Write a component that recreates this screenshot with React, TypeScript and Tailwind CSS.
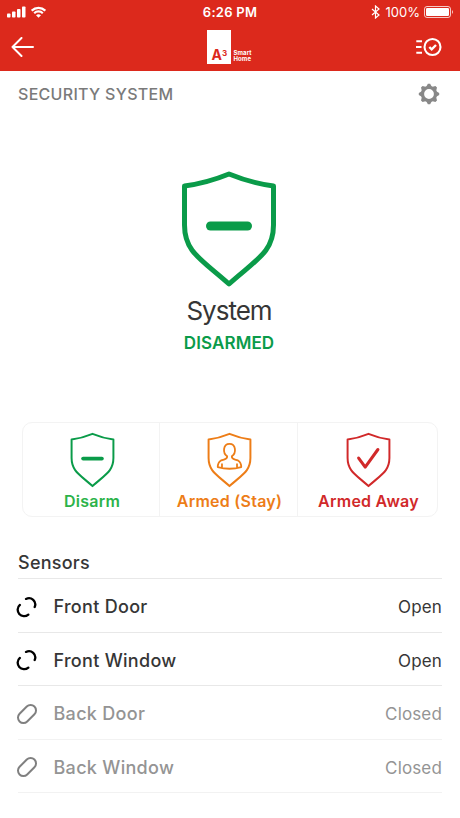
import type { ReactNode } from "react";

function Shield({ className, stroke, children }: { className: string; stroke: number; children: ReactNode }) {
  return (
    <svg viewBox="0 0 100 120" preserveAspectRatio="none" className={className} fill="none" stroke="currentColor" strokeWidth={stroke} strokeLinecap="round" strokeLinejoin="round">
      <path d="M50 6Q28 15 5.500 18V57C5.500 84 22 91 50 116C78 91 94.500 84 94.500 57V18Q72 15 50 6Z" />
      {children}
    </svg>
  );
}

function StatusBar() {
  return (
    <div className="flex h-6 items-center">
      <div className="flex w-[150px] items-center gap-[5px] pl-[7px]">
        <svg width="19" height="12" viewBox="0 0 19 12" fill="currentColor">
          <rect x="0" y="7.500" width="3.500" height="4" rx=".8" />
          <rect x="5" y="5.500" width="3.500" height="6" rx=".8" />
          <rect x="10" y="3" width="3.500" height="8.500" rx=".8" />
          <rect x="15" y="0.500" width="3.500" height="11" rx=".8" />
        </svg>
        <svg width="15" height="12" viewBox="0 0 15 12" fill="none" stroke="currentColor" strokeWidth="2.200">
          <path d="M.7 4.600a9.600 9.600 0 0 1 13.600 0M3.200 7.200a6.100 6.100 0 0 1 8.600 0" />
          <path d="M5 9.200Q7.500 7.100 10 9.200L7.500 11.700Z" fill="currentColor" stroke="none" />
        </svg>
      </div>
      <div className="w-[160px] text-center text-[13px] leading-4 font-semibold tracking-[0.25px]">6:26 PM</div>
      <div className="flex flex-1 items-center justify-end pr-[5px]">
        <svg width="9" height="14" viewBox="0 0 9 14" className="mr-[6px]" fill="none" stroke="currentColor" strokeWidth="1.200">
          <path d="M1 4L8 10L4.500 13V1L8 4L1 10" />
        </svg>
        <span className="mr-[4px] text-[13px] leading-4">100%</span>
        <svg width="31" height="12" viewBox="0 0 31 12">
          <rect x=".5" y=".5" width="26" height="11" rx="2.500" fill="none" stroke="currentColor" strokeOpacity=".75" />
          <rect x="2" y="2" width="23" height="8" rx="1.200" fill="currentColor" />
          <path d="M28 4Q30 6 28 8Z" fill="currentColor" fillOpacity=".75" />
        </svg>
      </div>
    </div>
  );
}

function Logo() {
  return (
    <div className="ml-[6px] flex h-[34px] w-[46px] items-end">
      <div className="flex h-[34px] w-[24px] shrink-0 items-end bg-white pb-[3px] pl-[5px] text-[#dc291c]">
        <span className="text-[14px] leading-3 font-bold">A</span>
        <span className="mb-[4px] text-[8px] leading-2 font-bold">3</span>
      </div>
      <div className="mb-[2px] ml-[3px] text-[6px] leading-[6px] font-bold tracking-[0.1px]">
        <div>Smart</div>
        <div>Home</div>
      </div>
    </div>
  );
}

function Header() {
  return (
    <header className="h-[71px] bg-[#dc291c] text-white">
      <StatusBar />
      <div className="flex h-[46px] items-center justify-between pr-[18px] pl-[11px]">
        <svg width="24" height="20" viewBox="0 0 24 20" className="mr-[2px]" fill="none" stroke="currentColor" strokeWidth="2" strokeLinecap="round" strokeLinejoin="round">
          <path d="M10.500 1L1.500 10L10.500 19M1.500 10H22" />
        </svg>
        <Logo />
        <svg width="26" height="20" viewBox="0 0 26 20" fill="none" stroke="currentColor" strokeWidth="2.100">
          <circle cx="16.500" cy="10" r="8" />
          <path d="M.3 4.300H6M0 10H5.500M.3 15.700H6" />
          <path d="M13.300 10L15.700 12.300L20 8" strokeWidth="2.400" />
        </svg>
      </div>
    </header>
  );
}

const teeth = [0, 45, 90, 135, 180, 225, 270, 315];

function Gear() {
  return (
    <svg width="22" height="22" viewBox="0 0 22 22" fill="none" stroke="currentColor">
      <circle cx="11" cy="11" r="6.500" strokeWidth="3.200" />
      {teeth.map((angle) => (
        <path key={angle} d="M7.900 4.200L9.900 .8H12.100L14.100 4.200Z" fill="currentColor" stroke="none" transform={`rotate(${angle} 11 11)`} />
      ))}
    </svg>
  );
}

function LinkIcon({ open }: { open: boolean }) {
  return (
    <svg width="22" height="22" viewBox="0 0 22 22" fill="none" stroke="currentColor" strokeWidth={open ? 2.3 : 2} strokeLinecap="round">
      {open ? (
        <path d="M10 2.900A6.300 6.300 0 0 1 18.700 11M3.900 8.900A6.300 6.300 0 0 0 12.300 18.600" />
      ) : (
        <rect x="0.500" y="5.600" width="21" height="10.800" rx="5.400" transform="rotate(-45 11 11)" />
      )}
    </svg>
  );
}

function SensorRow({ name, open }: { name: string; open: boolean }) {
  return (
    <div className={`flex h-[53.500px] items-center border-b pt-[3px] ${open ? "border-[#e8e8e8]" : "border-[#f2f2f2] text-[#949494]"}`}>
      <span className={`-ml-[2px] w-[37.500px] ${open ? "text-black" : "text-[#808080]"}`}>
        <LinkIcon open={open} />
      </span>
      <span className="flex-1 pt-px text-[18px] leading-6 font-medium tracking-[0.300px]">{name}</span>
      <span className="pt-px text-[17px] leading-6 tracking-[0.150px]">{open ? "Open" : "Closed"}</span>
    </div>
  );
}

export default function App() {
  return (
    <div className="h-[818px] w-[460px] overflow-hidden bg-white font-['Inter','Liberation_Sans',sans-serif] text-[#363636]">
      <Header />
      <main className="px-[18px]">
        <div className="flex h-[45px] items-center justify-between pr-[2px] text-[#7a7a7a]">
          <h1 className="text-[16px] leading-6 font-medium tracking-[0.300px]">SECURITY SYSTEM</h1>
          <span className="text-[#888]">
            <Gear />
          </span>
        </div>
        <section className="flex h-[306px] flex-col items-center pt-[52px] pr-[2px]">
          <Shield className="h-[120px] w-[100px] text-[#0a9b49]" stroke={5}>
            <path d="M31.500 58H68.500" strokeWidth="9" />
          </Shield>
          <div className="mt-[7px] text-[26px] leading-8 tracking-[-1px]">System</div>
          <div className="mt-[4px] text-[17px] leading-6 font-semibold tracking-[0.100px] text-[#0a9b49]">DISARMED</div>
        </section>
        <div className="ml-[4px] flex h-[95px] w-[416px] rounded-[10px] border border-[#f3f3f3] text-[16px] font-semibold tracking-[0.250px]">
          <button className="flex w-[137px] flex-col items-center border-r border-[#f3f3f3] pt-[8px] pl-[2px]">
            <Shield className="h-[57px] w-[47px] text-[#0a9b49]" stroke={4.2}>
              <path d="M30 58H70" strokeWidth="8" />
            </Shield>
            <span className="pt-px leading-6 text-[#2db34a]">Disarm</span>
          </button>
          <button className="flex w-[138px] flex-col items-center border-r border-[#f3f3f3] pt-[8px] pl-[2px] text-[#ed7d17]">
            <Shield className="h-[57px] w-[47px]" stroke={4.2}>
              <path d="M45 53C35 47 36 27 50 27C64 27 65 47 55 53M45 53C46 61 39 59 32 62Q25 66 25 76Q50 83 75 76Q75 66 68 62C61 59 54 61 55 53M34 70V76M66 70V76" strokeWidth="3.800" />
            </Shield>
            <span className="pt-px leading-6">Armed (Stay)</span>
          </button>
          <button className="flex flex-1 flex-col items-center pt-[8px] pl-px text-[#d1292a]">
            <Shield className="h-[57px] w-[47px]" stroke={4.2}>
              <path d="M29 57L43 76L70 39" strokeWidth="6.500" />
            </Shield>
            <span className="pt-px pl-px leading-6">Armed Away</span>
          </button>
        </div>
        <section className="pt-[28px]">
          <h2 className="h-[34px] border-b border-[#e8e8e8] pt-[6px] text-[18px] leading-6 font-medium tracking-[0.250px]">Sensors</h2>
          <SensorRow name="Front Door" open />
          <SensorRow name="Front Window" open />
          <SensorRow name="Back Door" open={false} />
          <SensorRow name="Back Window" open={false} />
        </section>
      </main>
    </div>
  );
}
